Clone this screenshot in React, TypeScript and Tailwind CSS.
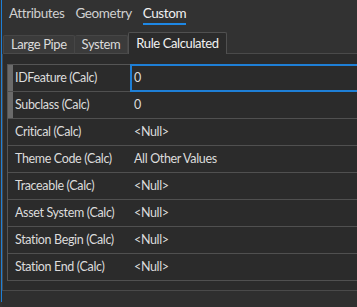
import React from "react";

const rows = [
  { label: "IDFeature (Calc)", value: "0", group: true, focused: true },
  { label: "Subclass (Calc)", value: "0", group: true },
  { label: "Critical (Calc)", value: "<Null>" },
  { label: "Theme Code (Calc)", value: "All Other Values" },
  { label: "Traceable (Calc)", value: "<Null>" },
  { label: "Asset System (Calc)", value: "<Null>" },
  { label: "Station Begin (Calc)", value: "<Null>" },
  { label: "Station End (Calc)", value: "<Null>" },
];

export default function App() {
  return (
    <div
      className="w-[357px] h-[307px] bg-[#323232] flex overflow-hidden text-[#dcdcdc]"
      style={{ fontFamily: 'Lato, "Noto Sans", sans-serif' }}
    >
      {/* left focus stripe */}
      <div className="ml-px w-px h-[302px] bg-[#1e7fd6] shrink-0" />

      <div className="flex-1 flex flex-col min-w-0">
        {/* Top tabs */}
        <div className="h-[32px] flex items-start pl-[7px] gap-[11px] text-[13.5px] tracking-[-0.4px] shrink-0">
          <div className="pt-[3px] h-[25px] text-[#d0d0d0]">Attributes</div>
          <div className="pt-[3px] h-[25px] text-[#d0d0d0]">Geometry</div>
          <div className="pt-[3px] h-[25px] text-[#f0f0f0] border-b-2 border-[#1e88e5]">Custom</div>
        </div>

        {/* Sub tabs */}
        <div className="h-[22px] flex items-end pl-[1px] shrink-0 text-[13px] tracking-[-0.4px]">
          <div className="h-[19px] px-[7px] flex items-center bg-[#3b3b3b] border border-[#464646] border-b-[#4a4a4a] rounded-t-[2px] leading-none">
            Large Pipe
          </div>
          <div className="h-[19px] px-[7px] flex items-center bg-[#3b3b3b] border border-[#464646] border-l-0 border-b-[#4a4a4a] rounded-t-[2px] leading-none">
            System
          </div>
          <div className="h-[22px] px-[7px] flex items-center bg-[#2b2b2b] border border-[#505050] border-b-0 rounded-t-[2px] leading-none text-[#f2f2f2]">
            Rule Calculated
          </div>
          <div className="flex-1 h-px bg-[#4a4a4a]" />
        </div>

        {/* Panel */}
        <div className="h-[237px] bg-[#2b2b2b] border-l border-b border-[#4a4a4a] pt-[10px] pl-[4px] shrink-0 overflow-hidden">
          <div className="w-[370px] border-t border-l border-[#555555] text-[12.5px] tracking-[-0.35px]">
            {rows.map((r) => (
              <div key={r.label} className="h-[27px] flex border-b border-[#505050]">
                <div className={`w-[5px] shrink-0 ${r.group ? "bg-[#6a6a6a]" : ""}`} />
                <div className="w-[117px] shrink-0 pl-[2px] flex items-center whitespace-nowrap">
                  {r.label}
                </div>
                <div
                  className={`flex-1 flex items-center whitespace-nowrap ${
                    r.focused ? "border-2 border-[#1e7fd6] -mt-px -mb-px pl-[2px]" : "pl-[4px]"
                  }`}
                >
                  {r.value}
                </div>
              </div>
            ))}
          </div>
        </div>

        <div className="flex-1 bg-[#2f2f2f]" />
      </div>
    </div>
  );
}
